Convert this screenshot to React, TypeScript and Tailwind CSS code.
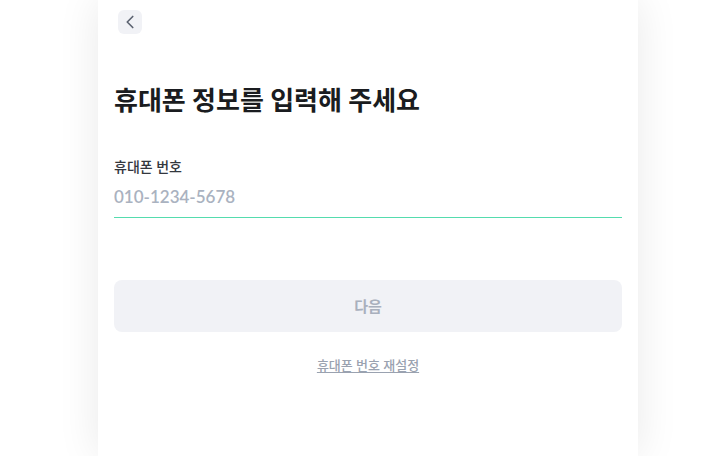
import { ChevronLeft } from 'lucide-react';

export default function App() {
    return (
        <div className="h-[456px] overflow-hidden bg-white font-['Lato','Noto_Sans_CJK_KR',sans-serif]">
            <div className="ml-[98px] h-full w-[540px] bg-white px-4 shadow-[0_0_40px_rgba(0,0,0,0.09)]">
                <div className="pt-[10px]">
                    <button className="ml-1 flex h-6 w-6 items-center justify-center rounded-md bg-[#f1f2f6] text-[#5b6270]">
                        <ChevronLeft size={22} strokeWidth={1.8} />
                    </button>
                </div>

                <h1 className="mt-[49px] text-[26px] leading-[34px] font-bold text-[#1a1c20]">휴대폰 정보를 입력해 주세요</h1>

                <div className="mt-[41px]">
                    <label className="block text-[14px] leading-[18px] font-medium text-[#33373e]">휴대폰 번호</label>
                    <input
                        className="mt-[3px] block h-[39px] w-full border-b border-[#55dcae] pb-1 text-[17px] font-semibold text-[#1a1c20] outline-none placeholder:text-[#aab2c0]"
                        placeholder="010-1234-5678"
                    />
                </div>

                <button className="mt-[62px] flex h-[52px] w-full items-center justify-center rounded-lg bg-[#f1f2f6] text-[15px] font-bold text-[#a9b0bd]">
                    다음
                </button>

                <div className="mt-[20px] text-center">
                    <a className="text-[13px] leading-[18px] font-medium text-[#9aa2b0] underline underline-offset-2">휴대폰 번호 재설정</a>
                </div>
            </div>
        </div>
    );
}
